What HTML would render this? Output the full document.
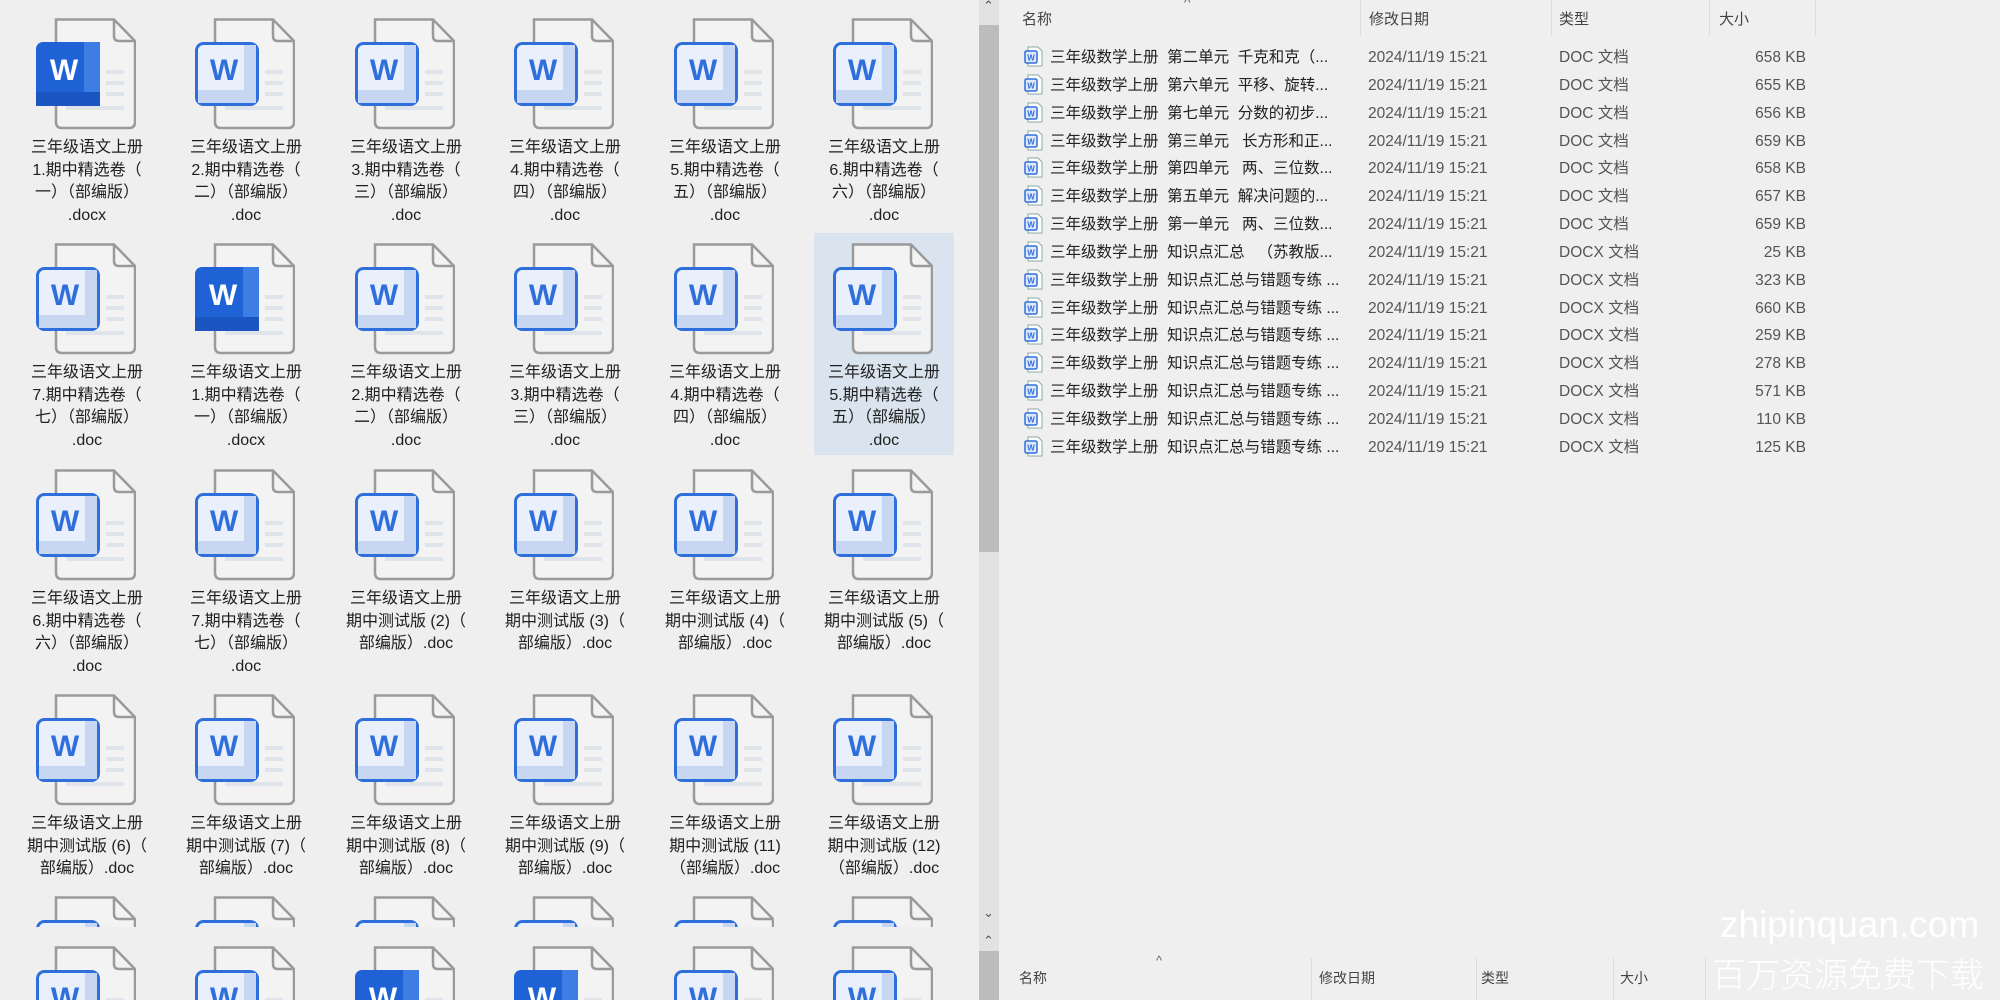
<!DOCTYPE html>
<html style="overflow:hidden;width:2000px;height:1000px"><head><meta charset="utf-8">
<style>
*{margin:0;padding:0;box-sizing:border-box}
body{width:2000px;height:1000px;overflow:hidden;background:#efefef;position:relative;font-family:"Liberation Sans","Noto Sans CJK SC",sans-serif;color:#222}
.ic{position:absolute;width:100px;height:112px}
.lbl{position:absolute;width:150px;text-align:center;font-size:16px;line-height:22.7px;color:#1e1e1e}
.sel{position:absolute;left:814px;top:233px;width:140px;height:222px;background:#d9e4ef}
.sb{position:absolute;left:979px;width:20px;background:#e2e2e2}
.th{position:absolute;left:979px;width:20px;background:#bcbcbc}
.hdr{position:absolute;font-size:15px;color:#444}
.sep{position:absolute;width:1px;background:#dcdcdc}
.row{position:absolute;left:1022px;height:28px;font-size:15.5px;color:#222;white-space:nowrap}
.row svg{position:absolute;left:2px;top:2px}
.row span{position:absolute;top:3px;line-height:22px;height:22px}
.row .n{left:28px}
.row .d{left:346px;color:#555}
.row .ty{left:537px;color:#555}
.row .s{left:700px;width:84px;text-align:right;color:#555}
.wm{position:absolute;color:#fff;font-weight:300;white-space:nowrap;line-height:1}
</style></head><body>
<svg width="0" height="0" style="position:absolute">
<defs>
<symbol id="pg" viewBox="0 0 100 112">
<path d="M20 1.5 H78 L99 23 V104 Q99 110 93 110 H26 Q20 110 20 104 Z" fill="#f3f3f3" stroke="#9a9a9a" stroke-width="2.5"/>
<path d="M78 1.5 V18 Q78 23 83 23 H99" fill="none" stroke="#9a9a9a" stroke-width="2.5"/>
<rect x="70" y="52" width="18" height="4" fill="#dfe3ea"/>
<rect x="70" y="63" width="18" height="4" fill="#dfe3ea"/>
<rect x="70" y="74" width="18" height="4" fill="#dfe3ea"/>
<rect x="30" y="88" width="58" height="4" fill="#dfe3ea"/>
</symbol>
<symbol id="wl" viewBox="0 0 100 112">
<use href="#pg"/>
<rect x="1.5" y="25.5" width="61" height="61" rx="7" fill="#eaf0fb" stroke="#2f6fdc" stroke-width="3"/>
<rect x="49" y="27" width="12" height="58" fill="#c7d6f1"/>
<rect x="3" y="72" width="58" height="13" fill="#c7d6f1"/>
<text x="29" y="62" text-anchor="middle" font-family="Liberation Sans" font-weight="bold" font-size="30" fill="#2f6fdc">W</text>
</symbol>
<symbol id="wd" viewBox="0 0 100 112">
<use href="#pg"/>
<rect x="0" y="24" width="64" height="64" rx="7" fill="#1e62d6"/>
<rect x="48" y="24" width="16" height="64" fill="#3d7de4"/>
<rect x="0" y="74" width="64" height="14" fill="#1a55c2"/>
<text x="28" y="62" text-anchor="middle" font-family="Liberation Sans" font-weight="bold" font-size="30" fill="#fff">W</text>
</symbol>
<symbol id="sm" viewBox="0 0 20 22">
<path d="M4 1 H14 L18 5 V20 H4 Z" fill="#fff" stroke="#8aa" stroke-width="1"/>
<rect x="1" y="5" width="12" height="12" rx="1.5" fill="#dfe8f8" stroke="#2f6fdc" stroke-width="1.5"/>
<text x="7" y="14.5" text-anchor="middle" font-family="Liberation Sans" font-weight="bold" font-size="8" fill="#2f6fdc">W</text>
</symbol>
</defs></svg>

<div class="sel"></div>

<svg class="ic" style="left:36px;top:18px"><use href="#wd"/></svg>
<svg class="ic" style="left:195px;top:18px"><use href="#wl"/></svg>
<svg class="ic" style="left:355px;top:18px"><use href="#wl"/></svg>
<svg class="ic" style="left:514px;top:18px"><use href="#wl"/></svg>
<svg class="ic" style="left:674px;top:18px"><use href="#wl"/></svg>
<svg class="ic" style="left:833px;top:18px"><use href="#wl"/></svg>
<div class="lbl" style="left:12px;top:137px">三年级语文上册<br>1.期中精选卷（<br>一）（部编版）<br>.docx</div>
<div class="lbl" style="left:171px;top:137px">三年级语文上册<br>2.期中精选卷（<br>二）（部编版）<br>.doc</div>
<div class="lbl" style="left:331px;top:137px">三年级语文上册<br>3.期中精选卷（<br>三）（部编版）<br>.doc</div>
<div class="lbl" style="left:490px;top:137px">三年级语文上册<br>4.期中精选卷（<br>四）（部编版）<br>.doc</div>
<div class="lbl" style="left:650px;top:137px">三年级语文上册<br>5.期中精选卷（<br>五）（部编版）<br>.doc</div>
<div class="lbl" style="left:809px;top:137px">三年级语文上册<br>6.期中精选卷（<br>六）（部编版）<br>.doc</div>

<svg class="ic" style="left:36px;top:243px"><use href="#wl"/></svg>
<svg class="ic" style="left:195px;top:243px"><use href="#wd"/></svg>
<svg class="ic" style="left:355px;top:243px"><use href="#wl"/></svg>
<svg class="ic" style="left:514px;top:243px"><use href="#wl"/></svg>
<svg class="ic" style="left:674px;top:243px"><use href="#wl"/></svg>
<svg class="ic" style="left:833px;top:243px"><use href="#wl"/></svg>
<div class="lbl" style="left:12px;top:362px">三年级语文上册<br>7.期中精选卷（<br>七）（部编版）<br>.doc</div>
<div class="lbl" style="left:171px;top:362px">三年级语文上册<br>1.期中精选卷（<br>一）（部编版）<br>.docx</div>
<div class="lbl" style="left:331px;top:362px">三年级语文上册<br>2.期中精选卷（<br>二）（部编版）<br>.doc</div>
<div class="lbl" style="left:490px;top:362px">三年级语文上册<br>3.期中精选卷（<br>三）（部编版）<br>.doc</div>
<div class="lbl" style="left:650px;top:362px">三年级语文上册<br>4.期中精选卷（<br>四）（部编版）<br>.doc</div>
<div class="lbl" style="left:809px;top:362px">三年级语文上册<br>5.期中精选卷（<br>五）（部编版）<br>.doc</div>

<svg class="ic" style="left:36px;top:469px"><use href="#wl"/></svg>
<svg class="ic" style="left:195px;top:469px"><use href="#wl"/></svg>
<svg class="ic" style="left:355px;top:469px"><use href="#wl"/></svg>
<svg class="ic" style="left:514px;top:469px"><use href="#wl"/></svg>
<svg class="ic" style="left:674px;top:469px"><use href="#wl"/></svg>
<svg class="ic" style="left:833px;top:469px"><use href="#wl"/></svg>
<div class="lbl" style="left:12px;top:588px">三年级语文上册<br>6.期中精选卷（<br>六）（部编版）<br>.doc</div>
<div class="lbl" style="left:171px;top:588px">三年级语文上册<br>7.期中精选卷（<br>七）（部编版）<br>.doc</div>
<div class="lbl" style="left:331px;top:588px">三年级语文上册<br>期中测试版 (2)（<br>部编版）.doc</div>
<div class="lbl" style="left:490px;top:588px">三年级语文上册<br>期中测试版 (3)（<br>部编版）.doc</div>
<div class="lbl" style="left:650px;top:588px">三年级语文上册<br>期中测试版 (4)（<br>部编版）.doc</div>
<div class="lbl" style="left:809px;top:588px">三年级语文上册<br>期中测试版 (5)（<br>部编版）.doc</div>

<svg class="ic" style="left:36px;top:694px"><use href="#wl"/></svg>
<svg class="ic" style="left:195px;top:694px"><use href="#wl"/></svg>
<svg class="ic" style="left:355px;top:694px"><use href="#wl"/></svg>
<svg class="ic" style="left:514px;top:694px"><use href="#wl"/></svg>
<svg class="ic" style="left:674px;top:694px"><use href="#wl"/></svg>
<svg class="ic" style="left:833px;top:694px"><use href="#wl"/></svg>
<div class="lbl" style="left:12px;top:813px">三年级语文上册<br>期中测试版 (6)（<br>部编版）.doc</div>
<div class="lbl" style="left:171px;top:813px">三年级语文上册<br>期中测试版 (7)（<br>部编版）.doc</div>
<div class="lbl" style="left:331px;top:813px">三年级语文上册<br>期中测试版 (8)（<br>部编版）.doc</div>
<div class="lbl" style="left:490px;top:813px">三年级语文上册<br>期中测试版 (9)（<br>部编版）.doc</div>
<div class="lbl" style="left:650px;top:813px">三年级语文上册<br>期中测试版 (11)<br>（部编版）.doc</div>
<div class="lbl" style="left:809px;top:813px">三年级语文上册<br>期中测试版 (12)<br>（部编版）.doc</div>

<div style="position:absolute;left:0;top:896px;width:979px;height:31px;overflow:hidden">
<svg class="ic" style="left:36px;top:0"><use href="#wl"/></svg>
<svg class="ic" style="left:195px;top:0"><use href="#wl"/></svg>
<svg class="ic" style="left:355px;top:0"><use href="#wl"/></svg>
<svg class="ic" style="left:514px;top:0"><use href="#wl"/></svg>
<svg class="ic" style="left:674px;top:0"><use href="#wl"/></svg>
<svg class="ic" style="left:833px;top:0"><use href="#wl"/></svg>
</div>
<div style="position:absolute;left:0;top:946px;width:979px;height:54px;overflow:hidden">
<svg class="ic" style="left:36px;top:0"><use href="#wl"/></svg>
<svg class="ic" style="left:195px;top:0"><use href="#wl"/></svg>
<svg class="ic" style="left:355px;top:0"><use href="#wd"/></svg>
<svg class="ic" style="left:514px;top:0"><use href="#wd"/></svg>
<svg class="ic" style="left:674px;top:0"><use href="#wl"/></svg>
<svg class="ic" style="left:833px;top:0"><use href="#wl"/></svg>
</div>

<div class="sb" style="top:0;height:1000px"></div>
<div class="th" style="top:25px;height:527px"></div>
<div class="th" style="top:951px;height:49px"></div>
<div style="position:absolute;left:983px;top:-2px;font-size:13px;color:#555">&#8963;</div>
<div style="position:absolute;left:983px;top:905px;font-size:13px;color:#555">&#8964;</div>
<div style="position:absolute;left:983px;top:933px;font-size:13px;color:#555">&#8963;</div>

<div style="position:absolute;left:1184px;top:-6px;font-size:14px;color:#666">^</div>
<div class="hdr" style="left:1022px;top:8px">名称</div>
<div class="hdr" style="left:1369px;top:8px">修改日期</div>
<div class="hdr" style="left:1559px;top:8px">类型</div>
<div class="hdr" style="left:1719px;top:8px">大小</div>
<div class="sep" style="left:1360px;top:0;height:36px"></div>
<div class="sep" style="left:1551px;top:0;height:36px"></div>
<div class="sep" style="left:1709px;top:0;height:36px"></div>
<div class="sep" style="left:1815px;top:0;height:36px"></div>

<div class="row" style="top:44px"><svg width="20" height="22"><use href="#sm"/></svg><span class="n">三年级数学上册&nbsp;&nbsp;第二单元&nbsp;&nbsp;千克和克（...</span><span class="d">2024/11/19 15:21</span><span class="ty">DOC 文档</span><span class="s">658 KB</span></div>
<div class="row" style="top:72px"><svg width="20" height="22"><use href="#sm"/></svg><span class="n">三年级数学上册&nbsp;&nbsp;第六单元&nbsp;&nbsp;平移、旋转...</span><span class="d">2024/11/19 15:21</span><span class="ty">DOC 文档</span><span class="s">655 KB</span></div>
<div class="row" style="top:100px"><svg width="20" height="22"><use href="#sm"/></svg><span class="n">三年级数学上册&nbsp;&nbsp;第七单元&nbsp;&nbsp;分数的初步...</span><span class="d">2024/11/19 15:21</span><span class="ty">DOC 文档</span><span class="s">656 KB</span></div>
<div class="row" style="top:128px"><svg width="20" height="22"><use href="#sm"/></svg><span class="n">三年级数学上册&nbsp;&nbsp;第三单元&nbsp;&nbsp;&nbsp;长方形和正...</span><span class="d">2024/11/19 15:21</span><span class="ty">DOC 文档</span><span class="s">659 KB</span></div>
<div class="row" style="top:155px"><svg width="20" height="22"><use href="#sm"/></svg><span class="n">三年级数学上册&nbsp;&nbsp;第四单元&nbsp;&nbsp;&nbsp;两、三位数...</span><span class="d">2024/11/19 15:21</span><span class="ty">DOC 文档</span><span class="s">658 KB</span></div>
<div class="row" style="top:183px"><svg width="20" height="22"><use href="#sm"/></svg><span class="n">三年级数学上册&nbsp;&nbsp;第五单元&nbsp;&nbsp;解决问题的...</span><span class="d">2024/11/19 15:21</span><span class="ty">DOC 文档</span><span class="s">657 KB</span></div>
<div class="row" style="top:211px"><svg width="20" height="22"><use href="#sm"/></svg><span class="n">三年级数学上册&nbsp;&nbsp;第一单元&nbsp;&nbsp;&nbsp;两、三位数...</span><span class="d">2024/11/19 15:21</span><span class="ty">DOC 文档</span><span class="s">659 KB</span></div>
<div class="row" style="top:239px"><svg width="20" height="22"><use href="#sm"/></svg><span class="n">三年级数学上册&nbsp;&nbsp;知识点汇总&nbsp;&nbsp;&nbsp;（苏教版...</span><span class="d">2024/11/19 15:21</span><span class="ty">DOCX 文档</span><span class="s">25 KB</span></div>
<div class="row" style="top:267px"><svg width="20" height="22"><use href="#sm"/></svg><span class="n">三年级数学上册&nbsp;&nbsp;知识点汇总与错题专练 ...</span><span class="d">2024/11/19 15:21</span><span class="ty">DOCX 文档</span><span class="s">323 KB</span></div>
<div class="row" style="top:295px"><svg width="20" height="22"><use href="#sm"/></svg><span class="n">三年级数学上册&nbsp;&nbsp;知识点汇总与错题专练 ...</span><span class="d">2024/11/19 15:21</span><span class="ty">DOCX 文档</span><span class="s">660 KB</span></div>
<div class="row" style="top:322px"><svg width="20" height="22"><use href="#sm"/></svg><span class="n">三年级数学上册&nbsp;&nbsp;知识点汇总与错题专练 ...</span><span class="d">2024/11/19 15:21</span><span class="ty">DOCX 文档</span><span class="s">259 KB</span></div>
<div class="row" style="top:350px"><svg width="20" height="22"><use href="#sm"/></svg><span class="n">三年级数学上册&nbsp;&nbsp;知识点汇总与错题专练 ...</span><span class="d">2024/11/19 15:21</span><span class="ty">DOCX 文档</span><span class="s">278 KB</span></div>
<div class="row" style="top:378px"><svg width="20" height="22"><use href="#sm"/></svg><span class="n">三年级数学上册&nbsp;&nbsp;知识点汇总与错题专练 ...</span><span class="d">2024/11/19 15:21</span><span class="ty">DOCX 文档</span><span class="s">571 KB</span></div>
<div class="row" style="top:406px"><svg width="20" height="22"><use href="#sm"/></svg><span class="n">三年级数学上册&nbsp;&nbsp;知识点汇总与错题专练 ...</span><span class="d">2024/11/19 15:21</span><span class="ty">DOCX 文档</span><span class="s">110 KB</span></div>
<div class="row" style="top:434px"><svg width="20" height="22"><use href="#sm"/></svg><span class="n">三年级数学上册&nbsp;&nbsp;知识点汇总与错题专练 ...</span><span class="d">2024/11/19 15:21</span><span class="ty">DOCX 文档</span><span class="s">125 KB</span></div>

<div style="position:absolute;left:1156px;top:953px;font-size:13px;color:#666">^</div>
<div class="hdr" style="left:1019px;top:968px;font-size:14px">名称</div>
<div class="hdr" style="left:1319px;top:968px;font-size:14px">修改日期</div>
<div class="hdr" style="left:1481px;top:968px;font-size:14px">类型</div>
<div class="hdr" style="left:1620px;top:968px;font-size:14px">大小</div>
<div class="sep" style="left:1311px;top:958px;height:42px"></div>
<div class="sep" style="left:1476px;top:958px;height:42px"></div>
<div class="sep" style="left:1613px;top:958px;height:42px"></div>
<div class="sep" style="left:1705px;top:958px;height:42px"></div>

<div class="wm" style="left:1720px;top:906px;font-size:37px">zhipinquan.com</div>
<div class="wm" style="left:1712px;top:956px;font-size:34px;font-family:'Noto Sans CJK SC',sans-serif">百万资源免费下载</div>
</body></html>
